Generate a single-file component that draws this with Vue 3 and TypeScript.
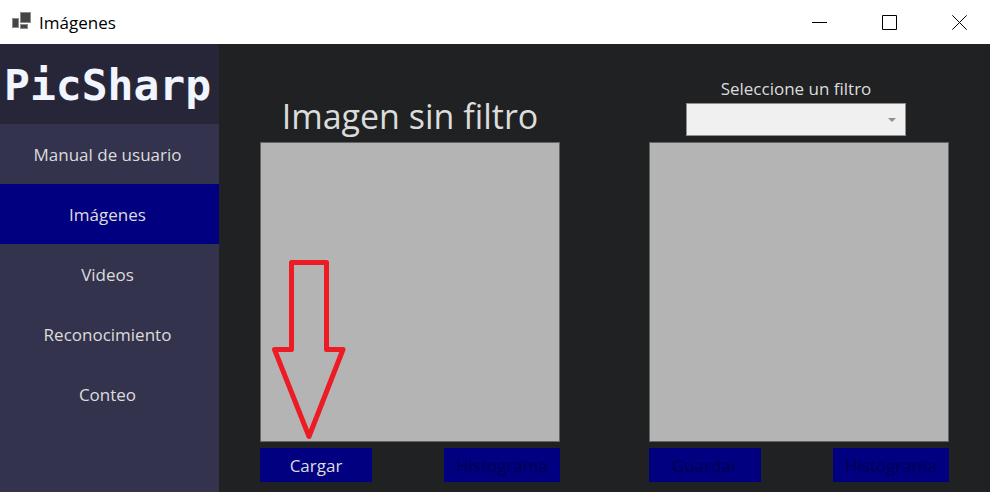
<script setup lang="ts">
import { ref } from 'vue'

const sections: string[] = ['Manual de usuario', 'Imágenes', 'Videos', 'Reconocimiento', 'Conteo']
const current = ref<string>('Imágenes')
const filter = ref<string>('')
</script>

<template>
  <div class="window">
    <header class="titlebar">
      <svg class="app-icon" width="20" height="18" viewBox="0 0 20 18" aria-hidden="true">
        <g fill="#454545" stroke="#8c8c8c" stroke-width="1">
          <rect x="8.5" y="0.5" width="10" height="10" />
          <rect x="0.5" y="6.5" width="6" height="9" />
          <rect x="8.5" y="12.5" width="7" height="4" />
        </g>
      </svg>
      <span class="title">Imágenes</span>
      <div class="controls">
        <button type="button" aria-label="Minimizar">
          <svg width="15" height="15" viewBox="0 0 15 15"><path d="M0 7.5H15" /></svg>
        </button>
        <button type="button" aria-label="Maximizar">
          <svg width="15" height="15" viewBox="0 0 15 15"><path d="M.5 .5H14.5V14.5H.5Z" /></svg>
        </button>
        <button type="button" aria-label="Cerrar">
          <svg width="15" height="15" viewBox="0 0 15 15"><path d="M.3 .3L14.7 14.7M14.7 .3L.3 14.7" /></svg>
        </button>
      </div>
    </header>

    <div class="body">
      <aside class="sidebar">
        <div class="logo">PicSharp</div>
        <nav class="menu">
          <button
            v-for="section in sections"
            :key="section"
            type="button"
            :class="{ active: section === current }"
            @click="current = section"
          >
            {{ section }}
          </button>
        </nav>
      </aside>

      <main class="content">
        <section class="column">
          <div class="head">
            <h1>Imagen sin filtro</h1>
          </div>
          <div class="picture">
            <svg class="arrow" width="76" height="184" viewBox="0 0 76 184" aria-hidden="true">
              <path d="M20.5 5.5H55.5V92.5H72L38 179.5L3.5 92.5H20.5Z" />
            </svg>
          </div>
          <div class="actions">
            <button type="button">Cargar</button>
            <button type="button" class="wide" disabled>Histograma</button>
          </div>
        </section>

        <section class="column">
          <div class="head filter">
            <label for="filter">Seleccione un filtro</label>
            <div class="select">
              <select id="filter" v-model="filter" disabled>
                <option value=""></option>
              </select>
              <svg class="caret" width="8" height="4" viewBox="0 0 8 4" aria-hidden="true">
                <path d="M0 0H8L4 4Z" />
              </svg>
            </div>
          </div>
          <div class="picture"></div>
          <div class="actions">
            <button type="button" disabled>Guardar</button>
            <button type="button" class="wide" disabled>Histograma</button>
          </div>
        </section>
      </main>
    </div>
  </div>
</template>

<style>
body {
  margin: 0;
  background: #202122;
}
</style>

<style scoped>
.window {
  display: flex;
  flex-direction: column;
  min-height: 100vh;
  font-family: 'Open Sans', 'Noto Sans', sans-serif;
  font-size: 17px;
  color: #dcdcdc;
}

button {
  padding: 0;
  border: 0;
  font: inherit;
  color: inherit;
}

.titlebar {
  display: flex;
  align-items: center;
  height: 44px;
  padding-left: 12px;
  background: #fff;
  color: #000;
}

.app-icon {
  margin-bottom: 2px;
}

.title {
  margin-left: 7px;
}

.controls {
  display: flex;
  margin-left: auto;
}

.controls button {
  display: flex;
  align-items: center;
  justify-content: center;
  width: 70px;
  height: 44px;
  padding-left: 8px;
  background: none;
}

.controls path {
  fill: none;
  stroke: #000;
  stroke-width: 1;
}

.body {
  display: flex;
  flex: 1;
}

.sidebar {
  flex: none;
  width: 219px;
  background: #34334d;
}

.logo {
  box-sizing: border-box;
  height: 80px;
  padding-left: 4px;
  background: #272639;
  color: #f0f5ff;
  font: bold 43px/82px 'DejaVu Sans Mono', monospace;
}

.menu {
  display: flex;
  flex-direction: column;
}

.menu button {
  height: 60px;
  padding-right: 4px;
  background: none;
}

.menu .active {
  background: #000080;
}

.content {
  display: grid;
  grid-template-columns: 1fr 1fr;
  gap: 89px;
  flex: 1;
  align-items: start;
  padding: 28px 41px 10px;
  background: #202122;
}

.head {
  display: flex;
  flex-direction: column;
  align-items: center;
  justify-content: flex-end;
  height: 70px;
}

.filter {
  padding-right: 6px;
}

h1 {
  margin: 0 0 2px;
  font-size: 34px;
  font-weight: 400;
  line-height: 48px;
}

label {
  margin-bottom: 2px;
  line-height: 24px;
}

.select {
  position: relative;
  width: 220px;
  margin-bottom: 6px;
}

select {
  display: block;
  box-sizing: border-box;
  width: 100%;
  height: 33px;
  border: 1px solid #8f8f8f;
  border-radius: 0;
  background: #f0f0f0;
  font: inherit;
  opacity: 1;
  appearance: none;
}

.caret {
  position: absolute;
  top: 15px;
  right: 10px;
  fill: #8f8f8f;
}

.picture {
  position: relative;
  box-sizing: border-box;
  aspect-ratio: 1;
  border: 1px solid #646464;
  background: #b4b4b4;
}

.arrow {
  position: absolute;
  bottom: 0;
  left: 10px;
  fill: none;
  stroke: #ed1c24;
  stroke-width: 5;
  stroke-linejoin: round;
}

.actions {
  display: flex;
  justify-content: space-between;
  margin-top: 6px;
}

.actions button {
  width: 112px;
  height: 34px;
  background: #000080;
}

.actions .wide {
  width: 116px;
}

.actions button:disabled {
  color: #000050;
}
</style>
